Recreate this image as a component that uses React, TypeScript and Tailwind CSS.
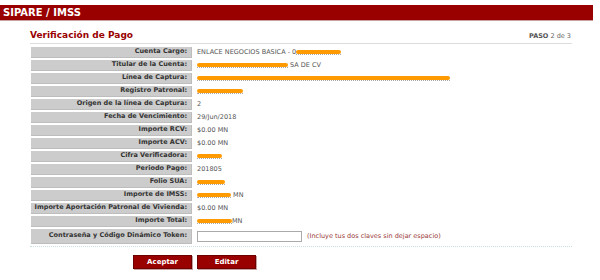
import React from 'react';

type Row = {
  label: string;
  value?: string;
  mark?: number;
  markAfter?: string;
  prefix?: string;
};

const rows: Row[] = [
  { label: 'Cuenta Cargo:', prefix: 'ENLACE NEGOCIOS BASICA - 0', mark: 45 },
  { label: 'Titular de la Cuenta:', mark: 91, markAfter: ' SA DE CV' },
  { label: 'Línea de Captura:', mark: 253 },
  { label: 'Registro Patronal:', mark: 46 },
  { label: 'Origen de la línea de Captura:', value: '2' },
  { label: 'Fecha de Vencimiento:', value: '29/Jun/2018' },
  { label: 'Importe RCV:', value: '$0.00 MN' },
  { label: 'Importe ACV:', value: '$0.00 MN' },
  { label: 'Cifra Verificadora:', mark: 25 },
  { label: 'Periodo Pago:', value: '201805' },
  { label: 'Folio SUA:', mark: 28 },
  { label: 'Importe de IMSS:', mark: 34, markAfter: ' MN' },
  { label: 'Importe Aportación Patronal de Vivienda:', value: '$0.00 MN' },
  { label: 'Importe Total:', mark: 35, markAfter: 'MN' },
];

function Mark({ w }: { w: number }) {
  return (
    <span className="relative inline-block h-[9px] align-middle" style={{ width: w }}>
      <span className="absolute left-0 right-0 top-[2px] h-[4px] rounded-full bg-[#ff9a00] blur-[0.3px]" />
      <span className="absolute left-0 right-0 top-[6px] h-[1px] border-b border-dotted border-[#aaa]" />
    </span>
  );
}

export default function App() {
  return (
    <div className="w-[600px] h-[280px] bg-white font-['DejaVu_Sans',Verdana,sans-serif] overflow-hidden">
      {/* Header */}
      <div className="mt-[5px] mr-[7px] h-[16px] bg-[#990000] border-b border-[#c9a0a0] flex items-center pl-[3px]">
        <span className="text-white font-bold text-[10px] leading-none">SIPARE / IMSS</span>
      </div>

      <div className="ml-[30px] w-[542px]">
        {/* Title */}
        <div className="flex items-end justify-between pt-[8px] pb-[2px] border-b border-[#dddddd]">
          <span className="text-[#990000] font-bold text-[9px] leading-[12px]">Verificación de Pago</span>
          <span className="text-[6.5px] text-[#666] leading-[10px] pr-[1px]">
            <span className="font-bold text-[#555]">PASO</span> 2 de 3
          </span>
        </div>

        {/* Rows */}
        <div className="mt-[3px] ml-[1px] flex flex-col gap-[2px]">
          {rows.map((r) => (
            <div key={r.label} className="flex h-[11px] items-center">
              <div className="w-[161px] h-full bg-[#cccccc] border-b border-r border-[#bdbdbd] flex items-center justify-end pr-[4px] text-[6.5px] font-bold text-[#333]">
                {r.label}
              </div>
              <div className="pl-[5px] text-[6.5px] text-[#555] flex items-center whitespace-nowrap">
                {r.prefix}
                {r.value}
                {r.mark ? <Mark w={r.mark} /> : null}
                {r.markAfter ? <span className="whitespace-pre">{r.markAfter}</span> : null}
              </div>
            </div>
          ))}
          <div className="flex h-[15px] items-center">
            <div className="w-[161px] h-full bg-[#cccccc] border-b border-r border-[#bdbdbd] flex items-center justify-end pr-[4px] text-[6.5px] font-bold text-[#333]">
              Contraseña y Código Dinámico Token:
            </div>
            <div className="pl-[5px] flex items-center gap-[5px]">
              <input className="w-[105px] h-[11px] border border-[#aaa] bg-white outline-none" type="password" />
              <span className="text-[6.5px] text-[#9b3b3b]">(Incluye tus dos claves sin dejar espacio)</span>
            </div>
          </div>
        </div>
        <div className="mt-[2px] border-b border-dotted border-[#c6e0e0]" />

        {/* Buttons */}
        <div className="mt-[8px] pl-[103px] flex gap-[5px]">
          <button className="w-[59px] h-[14px] bg-[#990000] border border-[#6d0000] shadow-[1px_1px_0_#c8a0a0] text-white font-bold text-[7px] leading-none">
            Aceptar
          </button>
          <button className="w-[59px] h-[14px] bg-[#990000] border border-[#6d0000] shadow-[1px_1px_0_#c8a0a0] text-white font-bold text-[7px] leading-none">
            Editar
          </button>
        </div>
      </div>
    </div>
  );
}
